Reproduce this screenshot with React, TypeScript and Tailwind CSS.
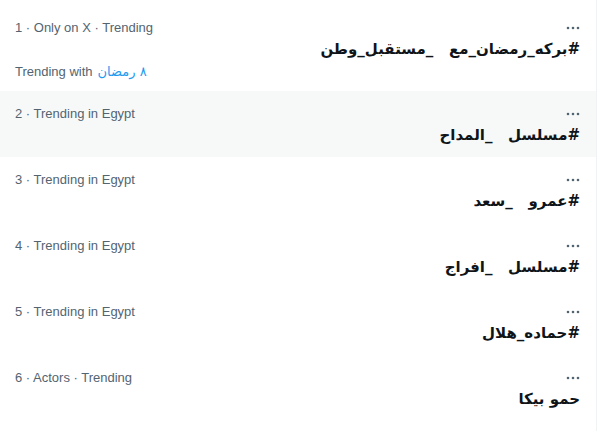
import React from "react";

type Trend = {
  meta: string;
  title: string;
  with?: string;
};

const trends: Trend[] = [
  { meta: "1 · Only on X · Trending", title: "#بركه_رمضان_مع\u00a0\u00a0\u00a0_مستقبل_وطن", with: "٨ رمضان" },
  { meta: "2 · Trending in Egypt", title: "#مسلسل\u00a0\u00a0\u00a0_المداح" },
  { meta: "3 · Trending in Egypt", title: "#عمرو\u00a0\u00a0\u00a0_سعد" },
  { meta: "4 · Trending in Egypt", title: "#مسلسل\u00a0\u00a0\u00a0_افراج" },
  { meta: "5 · Trending in Egypt", title: "#حماده_هلال" },
  { meta: "6 · Actors · Trending", title: "حمو بيكا" },
];

function Dots() {
  return (
    <svg width="14" height="4" viewBox="0 0 14 4" className="text-[#536471]">
      <circle cx="2" cy="2" r="1.3" fill="currentColor" />
      <circle cx="7" cy="2" r="1.3" fill="currentColor" />
      <circle cx="12" cy="2" r="1.3" fill="currentColor" />
    </svg>
  );
}

export default function App() {
  return (
    <div className="w-[602px] h-[431px] bg-white overflow-hidden font-['Liberation_Sans',sans-serif]">
      <div className="w-[597px] h-full border-r border-[#eff3f4] pt-[5px]">
        {trends.map((t, i) => (
          <div
            key={i}
            className={
              i === 1
                ? "bg-[#f7f9f9] pl-[15px] pr-4 pt-[13px] pb-[11px]"
                : i === 0
                ? "pl-[15px] pr-4 pt-[13px] pb-[9px]"
                : "pl-[15px] pr-4 pt-[13px] pb-[11px]"
            }
          >
            <div className="flex items-center justify-between h-5">
              <span className="text-[13px] text-[#536471]">{t.meta}</span>
              <Dots />
            </div>
            <div
              dir="rtl"
              className="h-[22px] text-[15px] font-bold text-[#0f1419] leading-[22px] font-['DejaVu_Sans',sans-serif]"
            >
              {t.title}
            </div>
            {t.with && (
              <div className="flex items-center h-5 mt-[2px] text-[13px] text-[#536471]">
                <span>Trending with</span>
                <span className="ml-[5px] text-[#1d9bf0] font-['DejaVu_Sans',sans-serif]">{t.with}</span>
              </div>
            )}
          </div>
        ))}
      </div>
    </div>
  );
}
